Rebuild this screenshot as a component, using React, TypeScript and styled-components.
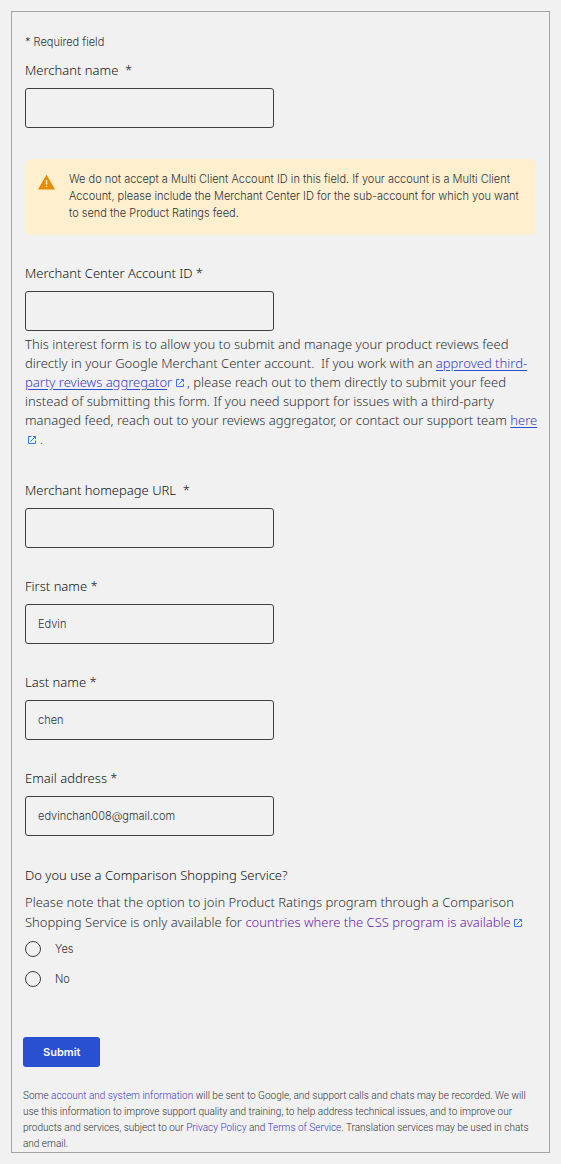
import React from "react";
import styled, { createGlobalStyle } from "styled-components";

const GlobalStyle = createGlobalStyle`
  *, *::before, *::after { box-sizing: border-box; }
  body {
    margin: 0;
    background: #f1f1f1;
    color: #2f3336;
    font-family: Inter, "Liberation Sans", sans-serif;
    font-weight: 300;
  }
`;

const Form = styled.form`
  margin: 11px;
  padding: 21px 13px 0;
  border: 1px solid #a3a4a4;
`;

const RequiredNote = styled.p`
  margin: 0 0 9px;
  font-size: 11px;
  line-height: 18px;
`;

const Field = styled.div<{ $gap?: number }>`
  display: flex;
  flex-direction: column;
  align-items: flex-start;
  margin-bottom: ${(p) => p.$gap ?? 28}px;
`;

const labelText = `
  color: #101214;
  font-family: "Noto Sans", sans-serif;
  font-size: 13px;
  line-height: 20px;
`;

const Label = styled.label`
  ${labelText}
  margin-bottom: 8px;
  white-space: pre;
`;

const TextInput = styled.input`
  width: 249px;
  max-width: 100%;
  height: 40px;
  padding: 0 12px;
  border: 1px solid #3c4043;
  border-radius: 3px;
  background: transparent;
  color: #2f3336;
  font: inherit;
  font-size: 11px;
`;

const Alert = styled.div`
  display: flex;
  gap: 13px;
  margin-bottom: 28px;
  padding: 12px 14px 13px 13px;
  border-radius: 6px;
  background: #feefcf;
  font-size: 11px;
  line-height: 17px;

  p { margin: 0; }
  svg { flex: none; margin-top: 3px; }
`;

const Help = styled.p<{ $line?: number }>`
  margin: 0 -4px 0 0;
  font-family: "Noto Sans", sans-serif;
  font-size: 13px;
  line-height: ${(p) => p.$line ?? 19}px;

  ${TextInput} + & { margin-top: 4px; }
`;

const Link = styled.a<{ $visited?: boolean }>`
  color: ${(p) => (p.$visited ? "#681da8" : "#3c3ac6")};
  text-decoration: none;
`;

const Underlined = styled.span`
  text-decoration: underline #2850d0;
  text-underline-offset: 2px;
`;

const Choices = styled.fieldset`
  margin: 0 0 43px;
  padding: 0;
  border: 0;
`;

const Legend = styled.legend`
  ${labelText}
  padding: 0;
  margin-bottom: 7px;
`;

const ChoiceList = styled.div`
  padding-top: 2px;
`;

const Choice = styled.label`
  display: flex;
  align-items: center;
  gap: 14px;
  height: 30px;
  font-size: 11px;
`;

const Radio = styled.input`
  appearance: none;
  flex: none;
  width: 16px;
  height: 16px;
  margin: 0;
  border: 1px solid #3c4043;
  border-radius: 50%;

  &:checked { box-shadow: inset 0 0 0 3px #f1f1f1; background: #2850d0; }
`;

const Actions = styled.div`
  margin-left: -2px;
`;

const Submit = styled.button`
  display: block;
  height: 30px;
  padding: 0 20px;
  border: 0;
  border-radius: 3px;
  background: #2850d0;
  color: #fff;
  font: inherit;
  font-size: 11px;
  font-weight: 600;
`;

const Legal = styled.p`
  margin: 21px 0 0;
  font-family: Roboto, sans-serif;
  font-size: 10px;
  line-height: 16px;
`;

const External = () => (
  <svg width="8" height="8" viewBox="0 0 8 8" fill="none" stroke="#3f74e8" strokeWidth="1" aria-hidden="true">
    <path d="M3.5 .5H.5v7h7v-3M5 .5h2.500V3M7.500.5 2.500 5.500" />
  </svg>
);

const Warning = () => (
  <svg width="18" height="16" viewBox="0 0 18 16" aria-hidden="true">
    <path d="M8.500 0.500 17 15.500H0z" fill="#e58c05" />
    <path d="M7.800 6h1.400v4.500H7.800zM7.800 11.700h1.400v1.400H7.800z" fill="#feefcf" />
  </svg>
);

export default function App() {
  return (
    <>
      <GlobalStyle />
      <Form onSubmit={(e) => e.preventDefault()}>
        <RequiredNote>* Required field</RequiredNote>
        <Field $gap={31}>
          <Label htmlFor="merchant">{"Merchant name  *"}</Label>
          <TextInput id="merchant" />
        </Field>
        <Alert role="note">
          <Warning />
          <p>
            We do not accept a Multi Client Account ID in this field. If your account is a Multi Client
            Account, please include the Merchant Center ID for the sub-account for which you want to
            send the Product Ratings feed.
          </p>
        </Alert>
        <Field $gap={31}>
          <Label htmlFor="account">Merchant Center Account ID *</Label>
          <TextInput id="account" />
          <Help>
            This interest form is to allow you to submit and manage your product reviews feed directly in
            your Google Merchant Center account.&nbsp; If you work with an{" "}
            <Link href="#aggregators"><Underlined>approved third-party reviews aggregato</Underlined>r</Link>{" "}
            <External /> , please reach out to them directly to submit your feed instead of submitting
            this form. If you need support for issues with a third-party managed feed, reach out to your
            reviews aggregator, or contact our support team{" "}
            <Link href="#support"><Underlined>here</Underlined></Link> &nbsp;<External /> .
          </Help>
        </Field>
        <Field>
          <Label htmlFor="homepage">{"Merchant homepage URL  *"}</Label>
          <TextInput id="homepage" type="url" />
        </Field>
        <Field>
          <Label htmlFor="first">First name *</Label>
          <TextInput id="first" defaultValue="Edvin" />
        </Field>
        <Field>
          <Label htmlFor="last">Last name *</Label>
          <TextInput id="last" defaultValue="chen" />
        </Field>
        <Field $gap={29}>
          <Label htmlFor="email">Email address *</Label>
          <TextInput id="email" type="email" defaultValue="edvinchan008@gmail.com" />
        </Field>
        <Choices>
          <Legend>Do you use a Comparison Shopping Service?</Legend>
          <Help $line={20}>
            Please note that the option to join Product Ratings program through a Comparison Shopping
            Service is only available for{" "}
            <Link href="#countries" $visited>countries where the CSS program is available</Link>{" "}
            <External />
          </Help>
          <ChoiceList>
            <Choice><Radio type="radio" name="css" value="yes" />Yes</Choice>
            <Choice><Radio type="radio" name="css" value="no" />No</Choice>
          </ChoiceList>
        </Choices>
        <Actions>
          <Submit type="submit">Submit</Submit>
          <Legal>
            Some <Link href="#info">account and system information</Link> will be sent to Google, and
            support calls and chats may be recorded. We will use this information to improve support
            quality and training, to help address technical issues, and to improve our products and
            services, subject to our <Link href="#privacy">Privacy Policy</Link> and{" "}
            <Link href="#terms">Terms of Service</Link>. Translation services may be used in chats and
            email.
          </Legal>
        </Actions>
      </Form>
    </>
  );
}
